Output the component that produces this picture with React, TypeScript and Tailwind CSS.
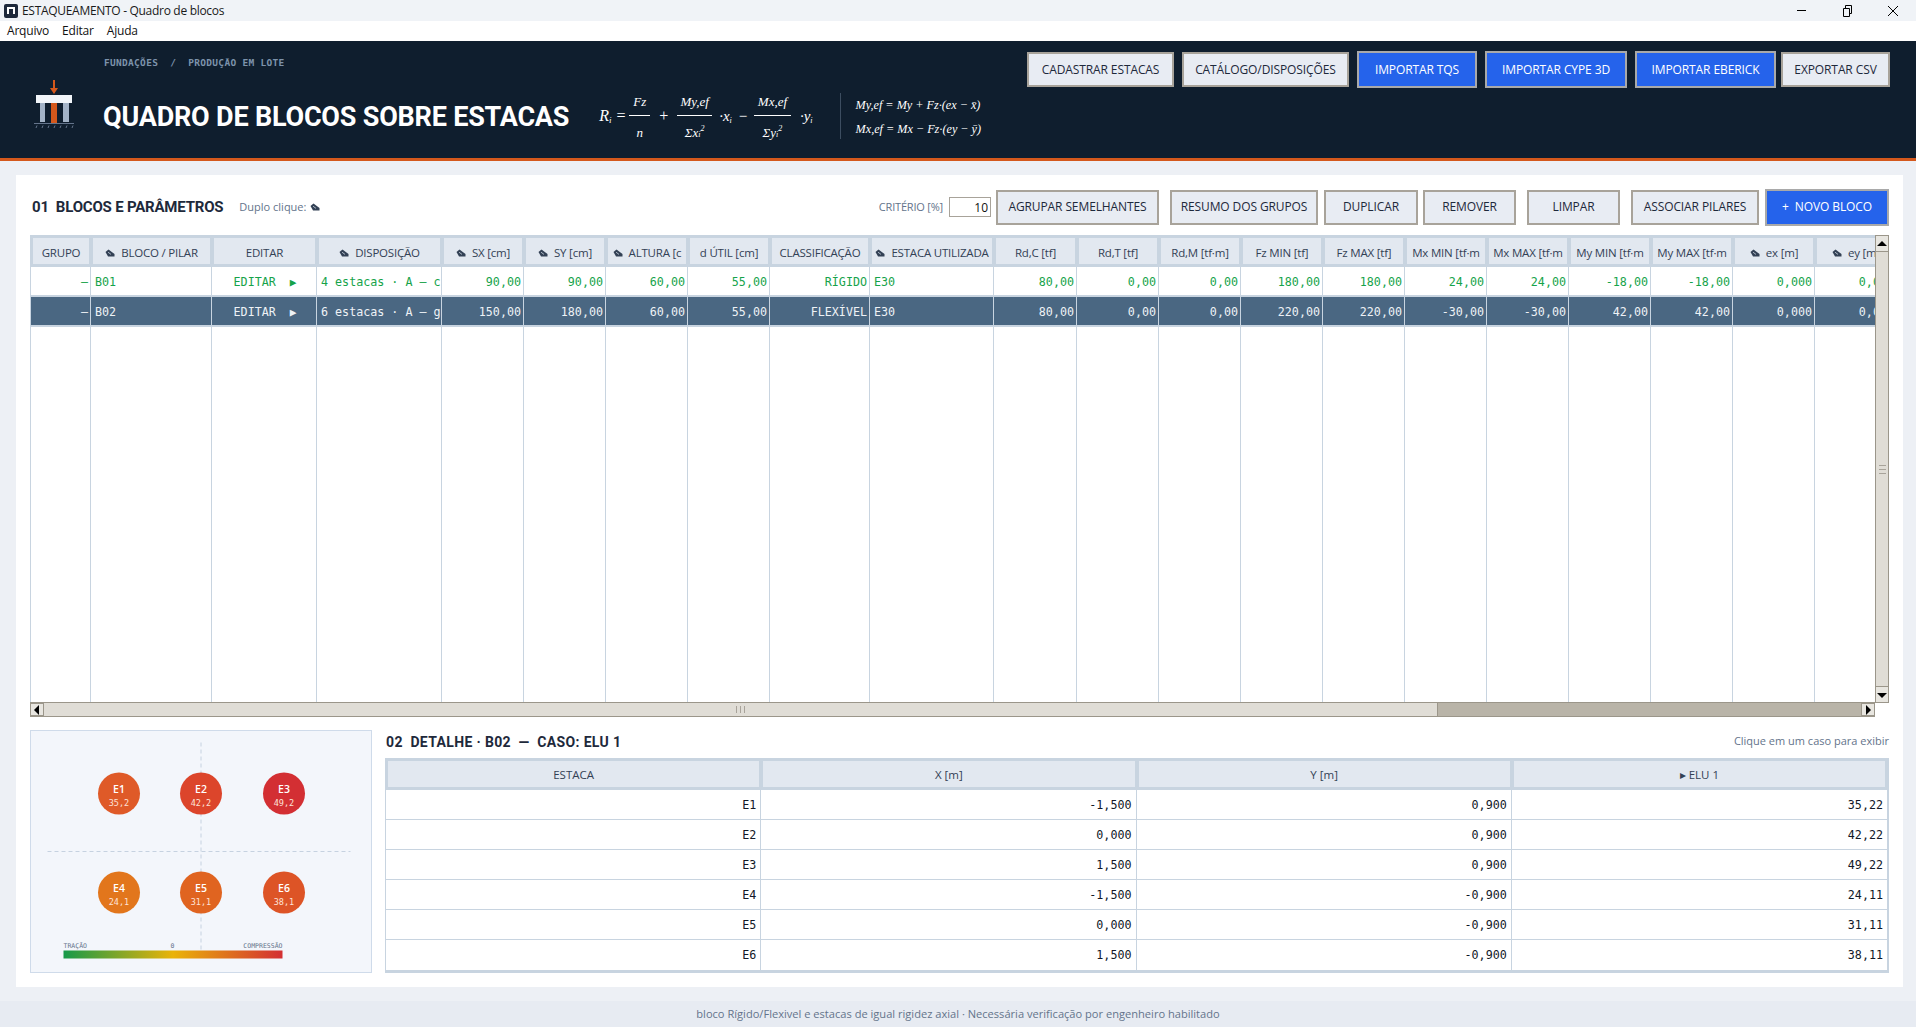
import { Fragment } from 'react';
import type { ReactNode } from 'react';

const SANS = 'font-["Open_Sans","Noto_Sans",sans-serif]';
const MONO = 'font-["DejaVu_Sans_Mono",monospace]';

const gridCols =
  'grid-cols-[60px_121px_105px_125px_82px_82px_82px_82px_100px_124px_83px_82px_82px_82px_82px_82px_82px_82px_82px_82px_82px_82px]';

const columns = [
  { label: 'GRUPO' },
  { label: 'BLOCO / PILAR', pen: true },
  { label: 'EDITAR' },
  { label: 'DISPOSIÇÃO', pen: true },
  { label: 'SX [cm]', pen: true },
  { label: 'SY [cm]', pen: true },
  { label: 'ALTURA [c', pen: true },
  { label: 'd ÚTIL [cm]' },
  { label: 'CLASSIFICAÇÃO' },
  { label: 'ESTACA UTILIZADA', pen: true },
  { label: 'Rd,C [tf]' },
  { label: 'Rd,T [tf]' },
  { label: 'Rd,M [tf·m]' },
  { label: 'Fz MIN [tf]' },
  { label: 'Fz MAX [tf]' },
  { label: 'Mx MIN [tf·m' },
  { label: 'Mx MAX [tf·m' },
  { label: 'My MIN [tf·m' },
  { label: 'My MAX [tf·m' },
  { label: 'ex [m]', pen: true },
  { label: 'ey [m]', pen: true },
  { label: '' },
];

const blocos = [
  {
    id: 'B01',
    dispo: '4 estacas · A — c',
    sx: '90,00',
    sy: '90,00',
    h: '60,00',
    d: '55,00',
    cls: 'RÍGIDO',
    rest: ['80,00', '0,00', '0,00', '180,00', '180,00', '24,00', '24,00', '-18,00', '-18,00', '0,000', '0,000'],
    selected: false,
  },
  {
    id: 'B02',
    dispo: '6 estacas · A — g',
    sx: '150,00',
    sy: '180,00',
    h: '60,00',
    d: '55,00',
    cls: 'FLEXÍVEL',
    rest: ['80,00', '0,00', '0,00', '220,00', '220,00', '-30,00', '-30,00', '42,00', '42,00', '0,000', '0,000'],
    selected: true,
  },
];

const detalhe = [
  ['E1', '-1,500', '0,900', '35,22'],
  ['E2', '0,000', '0,900', '42,22'],
  ['E3', '1,500', '0,900', '49,22'],
  ['E4', '-1,500', '-0,900', '24,11'],
  ['E5', '0,000', '-0,900', '31,11'],
  ['E6', '1,500', '-0,900', '38,11'],
];

const estacas = [
  { n: 'E1', v: '35,2', x: 88, y: 62.5, c: '#df5a28' },
  { n: 'E2', v: '42,2', x: 170, y: 62.5, c: '#dc452b' },
  { n: 'E3', v: '49,2', x: 253, y: 62.5, c: '#d32f33' },
  { n: 'E4', v: '24,1', x: 88, y: 161.5, c: '#e2761c' },
  { n: 'E5', v: '31,1', x: 170, y: 161.5, c: '#e06420' },
  { n: 'E6', v: '38,1', x: 253, y: 161.5, c: '#dd5426' },
];

function Pen({ className = 'mr-[6px]' }: { className?: string }) {
  return (
    <svg width="10" height="8" viewBox="0 0 10 8" className={`inline-block shrink-0 ${className}`}>
      <path d="M0.5 3 3.5 0.5 9.5 5 9.5 7.5 3 7.5Z" fill="#334155" />
      <path d="M3 3.2 6 5.4" stroke="#cbd5e1" strokeWidth="0.8" />
    </svg>
  );
}

function TopButton({ label, width, primary }: { label: string; width: string; primary?: boolean }) {
  return (
    <button
      className={`${width} shrink-0 border-2 text-center text-[12px] tracking-[-0.1px] ${SANS} ${
        primary
          ? 'h-[37px] border-[#a9a9a9] bg-[#2563eb] text-white'
          : 'h-[35px] border-[#a8a39a] bg-[#e8ecf3] text-[#1e293b]'
      }`}
    >
      {label}
    </button>
  );
}

function Fraction({ top, bottom, width }: { top: ReactNode; bottom: ReactNode; width: string }) {
  return (
    <span className="flex flex-col items-center">
      <span className="flex h-[26px] items-center">{top}</span>
      <span className={`${width} h-px bg-white`} />
      <span className="flex h-[34px] items-center">{bottom}</span>
    </span>
  );
}

function Formula() {
  return (
    <div className='mt-[48px] flex items-center font-["Liberation_Serif",serif] text-[13px] italic text-white'>
      <span className="mb-[7px] ml-[30px] mr-[3px] text-[16px]">
        R<sub className="text-[9px]">i</sub> =
      </span>
      <Fraction top="Fz" bottom="n" width="w-[21px]" />
      <span className="mx-[8px] mb-[7px] text-[16px]">+</span>
      <Fraction
        top="My,ef"
        bottom={
          <>
            Σx<sub className="text-[8px]">i</sub>
            <sup className="text-[8px]">2</sup>
          </>
        }
        width="w-[35px]"
      />
      <span className="mb-[7px] ml-[7px] text-[15px]">
        ·x<sub className="text-[8px]">i</sub>
      </span>
      <span className="mx-[6px] mb-[7px] text-[15px]">−</span>
      <Fraction
        top="Mx,ef"
        bottom={
          <>
            Σy<sub className="text-[8px]">i</sub>
            <sup className="text-[8px]">2</sup>
          </>
        }
        width="w-[37px]"
      />
      <span className="mb-[7px] ml-[9px] text-[15px]">
        ·y<sub className="text-[8px]">i</sub>
      </span>
      <div className="mb-[7px] ml-[27px] flex h-[46px] flex-col justify-between border-l border-[#3c4d60] pl-[15px] pt-[2px] text-[12.2px] leading-[20px]">
        <span>My,ef = My + Fz·(ex − x̄)</span>
        <span>Mx,ef = Mx − Fz·(ey − ȳ)</span>
      </div>
    </div>
  );
}

function Logo() {
  return (
    <svg width="40" height="50" viewBox="0 0 40 50" className="shrink-0">
      <path d="M20 0v9" stroke="#d4581c" strokeWidth="2" />
      <path d="M16 8h8l-4 6z" fill="#d4581c" />
      <rect x="2" y="15" width="36" height="8" fill="#f1f5f9" />
      <rect x="6" y="23" width="5" height="19" fill="#a3b3c7" />
      <rect x="17" y="23" width="6" height="20" fill="#d4581c" />
      <rect x="29" y="23" width="6" height="19" fill="#a3b3c7" />
      <rect x="0" y="43" width="40" height="1" fill="#64748b" />
      <path d="M3 45.5l-1 2.5M9 45.5l-1 2.5M15 45.5l-1 2.5M21 45.5l-1 2.5M27 45.5l-1 2.5M33 45.5l-1 2.5M39 45.5l-1 2.5" stroke="#64748b" />
    </svg>
  );
}

function ScrollArrow({ d }: { d: string }) {
  return (
    <svg width="10" height="10" viewBox="0 0 10 10">
      <path d={d} fill="#000" />
    </svg>
  );
}

function BlocosTable() {
  return (
    <div className="flex h-[482px]">
      <div className="flex w-[1845px] flex-col">
        <div className="flex-1 overflow-hidden border-l border-t-[3px] border-[#c8d4e0]">
          <div className={`grid h-full w-[1905px] grid-rows-[29px_30px_30px_1fr] ${gridCols}`}>
            {columns.map((col, i) => (
              <div
                key={i}
                className={`flex items-center justify-center overflow-hidden whitespace-nowrap border-x-2 border-b-[3px] border-[#c8d4e0] bg-[#e2e8f0] pt-[3px] text-[11.5px] tracking-[-0.2px] text-[#334155] ${SANS}`}
              >
                {col.pen && <Pen />}
                <span>{col.label}</span>
              </div>
            ))}
            {blocos.map((b) => {
              const rowClass = b.selected ? 'bg-[#4a6782] text-[#eef2f6]' : 'bg-white text-[#16a34a]';
              const cellClass = `flex items-center overflow-hidden whitespace-nowrap border-r border-b-2 border-[#c8d4e0] pl-[4px] pr-[2px] pt-[4px] text-[11.7px] ${MONO} ${rowClass}`;
              const nums = [b.sx, b.sy, b.h, b.d];
              return (
                <Fragment key={b.id}>
                  <div className={`${cellClass} justify-end`}>—</div>
                  <div className={cellClass}>{b.id}</div>
                  <div className={`${cellClass} justify-center`}>
                    EDITAR<span className="ml-[14px] text-[11px]">▶</span>
                  </div>
                  <div className={cellClass}>{b.dispo}</div>
                  {nums.map((n, i) => (
                    <div key={i} className={`${cellClass} justify-end`}>
                      {n}
                    </div>
                  ))}
                  <div className={`${cellClass} justify-end`}>{b.cls}</div>
                  <div className={cellClass}>E30</div>
                  {b.rest.map((n, i) => (
                    <div key={i} className={`${cellClass} justify-end`}>
                      {n}
                    </div>
                  ))}
                  <div className={cellClass} />
                </Fragment>
              );
            })}
            {columns.map((_, i) => (
              <div key={i} className="border-r border-[#c8d4e0] bg-white" />
            ))}
          </div>
        </div>
        {/* barra horizontal */}
        <div className="flex h-[15px] shrink-0 items-stretch border-y border-[#9b968a] bg-[#b9b4a8]">
          <div className="flex w-[14px] items-center justify-center border border-[#9b968a] bg-[#e8e6e0]">
            <ScrollArrow d="M7 0v10L2 5z" />
          </div>
          <div className="flex w-[1394px] items-center justify-center border-r border-[#9b968a] bg-[#e0ddd6]">
            <span className="flex h-[7px] w-[9px] justify-center border-x border-[#a8a39a]">
              <span className="h-full w-px bg-[#a8a39a]" />
            </span>
          </div>
          <div className="flex-1" />
          <div className="flex w-[14px] items-center justify-center border border-[#9b968a] bg-[#e8e6e0]">
            <ScrollArrow d="M3 0v10l5-5z" />
          </div>
        </div>
      </div>
      {/* barra vertical */}
      <div className="flex h-[468px] w-[15px] flex-col border border-[#9b968a] bg-[#e0ddd6]">
        <div className="flex h-[16px] items-center justify-center border-b border-[#9b968a] bg-[#e8e6e0]">
          <ScrollArrow d="M0 7h10L5 2z" />
        </div>
        <div className="flex flex-1 items-center justify-center">
          <span className="flex h-[9px] w-[7px] items-center border-y border-[#a8a39a]">
            <span className="h-px w-full bg-[#a8a39a]" />
          </span>
        </div>
        <div className="flex h-[16px] items-center justify-center border-t border-[#9b968a] bg-[#e8e6e0]">
          <ScrollArrow d="M0 3h10L5 8z" />
        </div>
      </div>
    </div>
  );
}

function PileDiagram() {
  return (
    <div className="h-[243px] w-[342px] shrink-0 border-[1.5px] border-[#cfdbea] bg-[#f3f6fb]">
      <svg width="339" height="240" viewBox="0 0 339 240" className="block">
        <path d="M170 11.5V219.5" stroke="#c6d2e0" strokeDasharray="4 3" />
        <path d="M16.5 120.5H319.5" stroke="#c6d2e0" strokeDasharray="4 3" />
        {estacas.map((e) => (
          <g key={e.n}>
            <circle cx={e.x} cy={e.y} r="21" fill={e.c} />
            <text x={e.x} y={e.y - 0.5} textAnchor="middle" fontSize="10.5" fontWeight="600" fill="#fff" fontFamily="'Open Sans'">
              {e.n}
            </text>
            <text x={e.x} y={e.y + 12} textAnchor="middle" fontSize="8.5" fill="#fde2d8" fontFamily="'DejaVu Sans Mono'">
              {e.v}
            </text>
          </g>
        ))}
        <defs>
          <linearGradient id="escala" x1="0" x2="1" y1="0" y2="0">
            <stop offset="0" stopColor="#16994a" />
            <stop offset="0.5" stopColor="#eab308" />
            <stop offset="1" stopColor="#d32f33" />
          </linearGradient>
        </defs>
        <rect x="32.5" y="219.5" width="219" height="8" fill="url(#escala)" />
        <text x="32.5" y="217" fontSize="6.5" fill="#64748b" fontFamily="'DejaVu Sans Mono'">TRAÇÃO</text>
        <text x="141.5" y="217" fontSize="6.5" textAnchor="middle" fill="#64748b" fontFamily="'DejaVu Sans Mono'">0</text>
        <text x="251.5" y="217" fontSize="6.5" textAnchor="end" fill="#64748b" fontFamily="'DejaVu Sans Mono'">COMPRESSÃO</text>
      </svg>
    </div>
  );
}

function DetalheTable() {
  return (
    <div className="border-b-[3px] border-l border-r-2 border-t-[3px] border-[#c8d4e0]">
      <div className={`grid h-[29px] grid-cols-4 ${SANS}`}>
        {['ESTACA', 'X [m]', 'Y [m]', '▸ ELU 1'].map((h) => (
          <div
            key={h}
            className="flex items-center justify-center border-x-2 border-b-[3px] border-[#c8d4e0] bg-[#e2e8f0] pt-[2px] text-[11.5px] text-[#334155]"
          >
            {h}
          </div>
        ))}
      </div>
      {detalhe.map((row) => (
        <div key={row[0]} className="grid h-[30px] grid-cols-4 border-b border-[#c8d4e0] last:border-b-0">
          {row.map((c, i) => (
            <div
              key={i}
              className={`flex items-center justify-end border-r border-[#c8d4e0] px-[4px] pt-[2px] text-[11.7px] text-[#111827] last:border-r-0 ${MONO}`}
            >
              {c}
            </div>
          ))}
        </div>
      ))}
    </div>
  );
}

export default function App() {
  return (
    <div className={`flex h-[1027px] flex-col overflow-hidden bg-[#edf0f5] ${SANS}`}>
      {/* titulo da janela */}
      <div className="flex h-[21px] shrink-0 items-center justify-between bg-[#f0f3f7] pl-[4px] text-[12px] tracking-[-0.3px] text-[#1a1a1a]">
        <div className="flex items-center gap-[4px]">
          <span className="flex h-[14px] w-[14px] items-center justify-center rounded-[2px] bg-[#1e293b]">
            <span className="h-[7px] w-[8px] border-x-2 border-t-2 border-white" />
          </span>
          ESTAQUEAMENTO - Quadro de blocos
        </div>
        <div className="flex items-center">
          <span className="flex w-[46px] justify-center">
            <span className="h-px w-[9px] bg-black" />
          </span>
          <span className="flex w-[46px] justify-center">
            <svg width="11" height="12" viewBox="0 0 11 12" fill="none" stroke="#000">
              <path d="M1.5 3.5h6v8h-6z" />
              <path d="M3.5 3.5v-3h6v8h-2" />
            </svg>
          </span>
          <span className="flex w-[46px] justify-center">
            <svg width="12" height="12" viewBox="0 0 12 12" stroke="#000">
              <path d="M1 1 11 11M11 1 1 11" />
            </svg>
          </span>
        </div>
      </div>
      {/* menu */}
      <div className="flex h-[20px] shrink-0 items-center gap-[13px] bg-white pl-[7px] text-[12px] tracking-[-0.2px] text-[#111]">
        <span>Arquivo</span>
        <span>Editar</span>
        <span>Ajuda</span>
      </div>
      {/* cabecalho */}
      <header className="flex h-[120px] shrink-0 justify-between border-b-[3px] border-[#d4581c] bg-[#0f1e2e]">
        <div className="flex items-start">
          <div className="ml-[34px] mt-[39px]">
            <Logo />
          </div>
          <div className="ml-[29px]">
            <div className={`ml-[1px] mt-[15px] text-[9.5px] font-bold tracking-[0.3px] text-[#7d93ab] ${MONO}`}>
              FUNDAÇÕES&nbsp;&nbsp;/&nbsp;&nbsp;PRODUÇÃO EM LOTE
            </div>
            <div className='mt-[31px] font-["Roboto",sans-serif] text-[27px] font-bold leading-[32px] tracking-[-0.2px] text-white'>
              QUADRO DE BLOCOS SOBRE ESTACAS
            </div>
          </div>
          <Formula />
        </div>
        <div className="mr-[26px] mt-[10px] flex h-[37px] items-center gap-[8px]">
          <TopButton label="CADASTRAR ESTACAS" width="w-[147px]" />
          <TopButton label="CATÁLOGO/DISPOSIÇÕES" width="w-[167px]" />
          <TopButton label="IMPORTAR TQS" width="w-[120px]" primary />
          <TopButton label="IMPORTAR CYPE 3D" width="w-[142px]" primary />
          <TopButton label="IMPORTAR EBERICK" width="w-[141px]" primary />
          <TopButton label="EXPORTAR CSV" width="w-[109px] -ml-[3px]" />
        </div>
      </header>
      {/* conteudo */}
      <main className="mx-[16px] mt-[14px] h-[812px] w-[1887px] shrink-0 bg-white px-[14px]">
        <div className="flex h-[60px] items-center justify-between pt-[4px]">
          <div className="ml-[2px] flex items-center">
            <span className='font-["Roboto",sans-serif] text-[15px] font-bold tracking-[-0.2px] text-[#1e293b]'>
              01&nbsp;&nbsp;BLOCOS E PARÂMETROS
            </span>
            <span className="ml-[16px] flex items-center gap-[4px] text-[11px] text-[#64748b]">
              Duplo clique: <Pen className="" />
            </span>
          </div>
          <div className="flex items-center">
            <span className="mr-[6px] text-[11px] tracking-[-0.2px] text-[#64748b]">CRITÉRIO [%]</span>
            <input
              readOnly
              value="10"
              className="mr-[5px] h-[20px] w-[42px] border border-[#a8a39a] bg-white pr-[2px] text-right text-[12px] text-[#111]"
            />
            <div className="flex items-center">
              <TopButton label="AGRUPAR SEMELHANTES" width="w-[163px] mr-[11px]" />
              <TopButton label="RESUMO DOS GRUPOS" width="w-[148px] mr-[6px]" />
              <TopButton label="DUPLICAR" width="w-[94px] mr-[5px]" />
              <TopButton label="REMOVER" width="w-[93px] mr-[11px]" />
              <TopButton label="LIMPAR" width="w-[93px] mr-[11px]" />
              <TopButton label="ASSOCIAR PILARES" width="w-[128px] mr-[6px]" />
              <TopButton label={'+\u00a0\u00a0NOVO BLOCO'} width="w-[124px]" primary />
            </div>
          </div>
        </div>
        <BlocosTable />
        <div className="mt-[13px] flex gap-[13px]">
          <PileDiagram />
          <div className="flex-1">
            <div className="flex h-[28px] items-start justify-between pt-[2px]">
              <span className='ml-[1px] font-["Roboto",sans-serif] text-[14px] font-bold tracking-[0.35px] text-[#1e293b]'>
                02&nbsp;&nbsp;DETALHE · B02&nbsp;&nbsp;—&nbsp;&nbsp;CASO: ELU 1
              </span>
              <span className="pt-[1px] text-[11px] text-[#64748b]">Clique em um caso para exibir</span>
            </div>
            <DetalheTable />
          </div>
        </div>
      </main>
      <div className="mt-[14px] flex h-[26px] shrink-0 items-center justify-center bg-[#e7ebf2] text-[11.1px] text-[#64748b]">
        bloco Rígido/Flexivel e estacas de igual rigidez axial · Necessária verificação por engenheiro habilitado
      </div>
    </div>
  );
}
